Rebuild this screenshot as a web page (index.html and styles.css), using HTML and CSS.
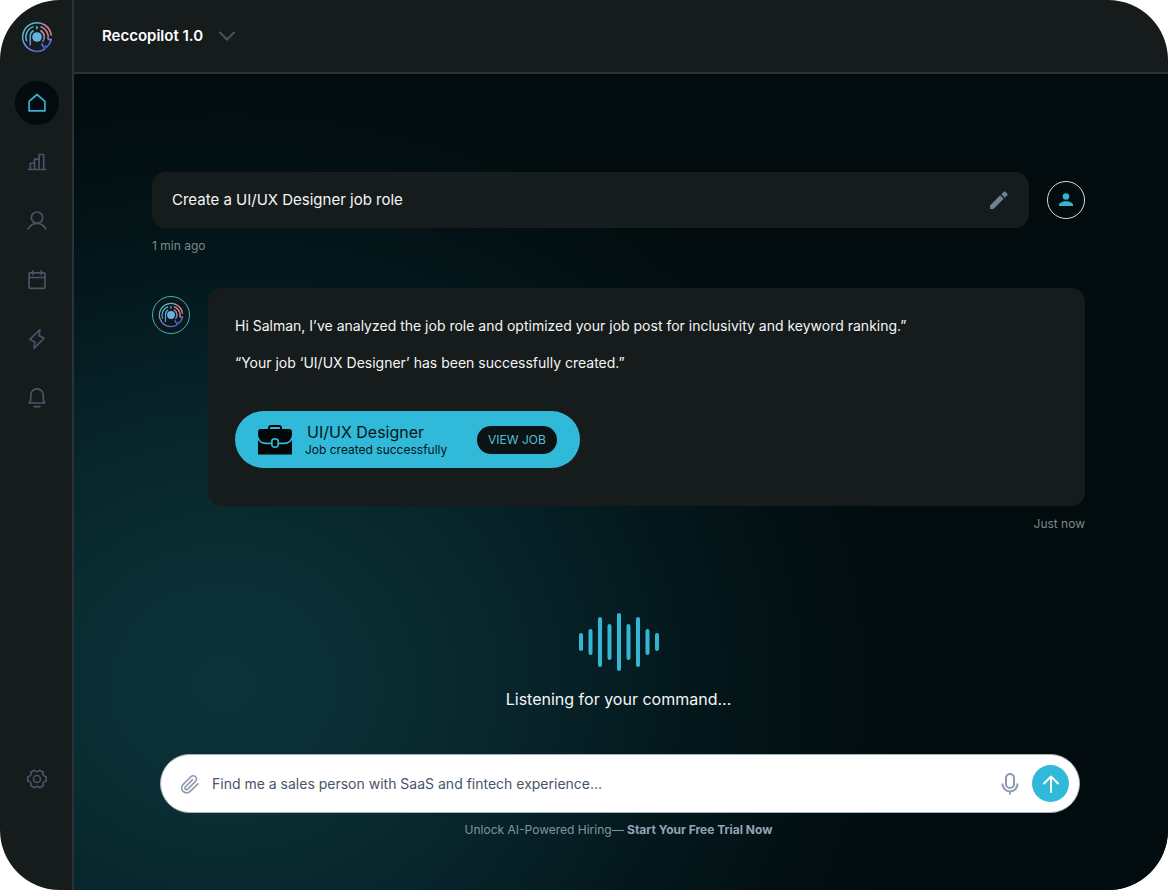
FILE: index.html
```html
<!DOCTYPE html>
<html lang="en">
<head>
<meta charset="utf-8">
<meta name="viewport" content="width=device-width, initial-scale=1">
<title>Reccopilot</title>
<link rel="stylesheet" href="styles.css">
</head>
<body>
<svg class="defs" aria-hidden="true">
  <defs>
    <linearGradient id="brand" x1="6" y1="6" x2="22" y2="30" gradientUnits="userSpaceOnUse">
      <stop offset="0" stop-color="#4cc3cf"/>
      <stop offset=".55" stop-color="#6b93d8"/>
      <stop offset="1" stop-color="#4560d6"/>
    </linearGradient>
    <radialGradient id="warm" cx="28" cy="9" r="13" gradientUnits="userSpaceOnUse">
      <stop offset="0" stop-color="#f06a68"/>
      <stop offset=".45" stop-color="#e0707c" stop-opacity=".85"/>
      <stop offset="1" stop-color="#b07aa8" stop-opacity="0"/>
    </radialGradient>
    <g id="logo-lines">
      <path d="M30.200 14.500A14.300 14.300 0 1 0 23.800 28L20.500 22.500"/>
      <path d="M27 18.500H30.200A14.300 14.300 0 0 1 25.500 26.500L24 24.500"/>
      <path d="M5.800 20.500A11 11 0 0 1 12.500 5.600M15.900 5V8.300M19.500 5.600A11 11 0 0 1 27 18.500"/>
      <path d="M9.200 24.500V16A7.300 7.300 0 0 1 12.500 9.500M19.500 9.500A7.500 7.500 0 0 1 21.500 21"/>
    </g>
    <symbol id="logo" viewBox="0 0 32 32">
      <g fill="none" stroke-width="1.500">
        <use href="#logo-lines" stroke="url(#brand)"/>
        <use href="#logo-lines" stroke="url(#warm)"/>
      </g>
      <circle cx="16" cy="16" r="4.800" fill="#65b4e0"/>
    </symbol>
  </defs>
</svg>
<div class="app">
  <nav class="sidebar" aria-label="Main">
    <a class="brand" href="#" aria-label="Reccopilot"><svg class="brand-logo"><use href="#logo"/></svg></a>
    <div class="nav-list">
      <a class="nav-item nav-item-active" href="#" aria-label="Home"><svg class="icon" viewBox="0 0 24 24"><path d="M2.500 21.500V10L12 1.800L21.500 10V21.500Z"/></svg></a>
      <a class="nav-item" href="#" aria-label="Analytics"><svg class="icon" viewBox="0 0 24 24"><path d="M1.500 21H22.500M4 21V13.500H9V21M9 21V8.500H14.500V21M14.500 21V3H20V21"/></svg></a>
      <a class="nav-item" href="#" aria-label="Candidates"><svg class="icon" viewBox="0 0 24 24"><circle cx="12" cy="8" r="6.800"/><path d="M1.500 21.500C4 16.800 8 14.800 12 14.800S20 16.800 22.500 21.500"/></svg></a>
      <a class="nav-item" href="#" aria-label="Calendar"><svg class="icon" viewBox="0 0 24 24"><rect x="2.500" y="3.500" width="19" height="18.500" rx="1"/><path d="M2.500 9H21.500M7 1V5.500M17 1V5.500"/></svg></a>
      <a class="nav-item" href="#" aria-label="Automation"><svg class="icon" viewBox="0 0 24 24"><path d="M15.500 .8L3.500 12.500L9.500 15.500L8.500 23.200L20.500 11L14.500 8Z"/></svg></a>
      <a class="nav-item" href="#" aria-label="Notifications"><svg class="icon" viewBox="0 0 24 24"><path d="M2.500 18H21.500L19.500 14.500V8.500A7.500 7.500 0 0 0 4.500 8.500V14.500ZM8.500 22.300H15.500"/></svg></a>
    </div>
    <a class="nav-item nav-item-settings" href="#" aria-label="Settings"><svg class="icon" viewBox="0 0 24 24"><circle cx="12" cy="12" r="4.200"/><path d="M9 1.500C10 3.600 14 3.600 15 1.500L19.500 4C18.300 6.400 19.500 9 23 9.300V14.700C19.500 15 18.300 17.600 19.500 20L15 22.500C14 20.400 10 20.400 9 22.500L4.500 20C5.700 17.600 4.500 15 1 14.700V9.300C4.500 9 5.700 6.400 4.500 4Z"/></svg></a>
  </nav>

  <div class="workspace">
    <header class="topbar">
      <div class="model">
        <select class="model-select" aria-label="Model"><option>Reccopilot 1.0</option></select>
        <svg class="model-chevron" viewBox="0 0 18 10" aria-hidden="true"><path d="M1.500 1L9 8.500L16.500 1"/></svg>
      </div>
    </header>

    <main class="chat">
      <section class="message message-user">
        <div class="prompt">
          <p class="prompt-text">Create a UI/UX Designer job role</p>
          <button class="icon-button" type="button" aria-label="Edit prompt"><svg class="edit-icon" viewBox="0 0 20 20"><path d="M1 15.500V19H4.500L14.700 8.800L11.200 5.300ZM12.300 4.200L15.800 7.700L18.600 4.900Q19 4.500 18.600 4L16 1.400Q15.500 1 15.100 1.400Z"/></svg></button>
        </div>
        <span class="avatar avatar-user"><svg class="user-icon" viewBox="0 0 16 16"><circle cx="8" cy="4.500" r="3.300"/><path d="M1 14V13C1 10.500 5 9.300 8 9.300S15 10.500 15 13V14Z"/></svg></span>
      </section>
      <time class="stamp">1 min ago</time>

      <section class="message message-bot">
        <span class="avatar avatar-bot"><svg class="avatar-logo"><use href="#logo"/></svg></span>
        <div class="reply">
          <p class="reply-text">Hi Salman, I’ve analyzed the job role and optimized your job post for inclusivity and keyword ranking.”</p>
          <p class="reply-text">“Your job ‘UI/UX Designer’ has been successfully created.”</p>
          <div class="job">
            <svg class="job-icon" viewBox="0 0 34 30" aria-hidden="true">
              <path d="M11 5V3Q11 1 13 1H21Q23 1 23 3V5" fill="none" stroke="#030708" stroke-width="2"/>
              <path d="M3 4H31Q34 4 34 7V10Q33 17.500 26 17.500H21V16Q21 13 17 13T13 16V17.500H8Q1 17.500 0 10V7Q0 4 3 4Z"/>
              <path d="M0 15Q3 19.300 8 19.300H13Q13 23 17 23T21 19.300H26Q31 19.300 34 15V29.500H0Z"/>
              <rect x="14.700" y="14.700" width="4.600" height="6.600" rx="1.500"/>
            </svg>
            <div class="job-info">
              <strong class="job-title">UI/UX Designer</strong>
              <span class="job-status">Job created successfully</span>
            </div>
            <button class="job-view" type="button">VIEW JOB</button>
          </div>
        </div>
      </section>
      <time class="stamp stamp-end">Just now</time>

      <section class="listening">
        <svg class="wave" viewBox="0 0 80 58" aria-hidden="true"><path d="M2 22V36M11.500 18V40M21 6V52M30.500 13V45M40 2V56M49.500 13V45M59 6V52M68.500 18V40M78 22V36"/></svg>
        <p class="listening-text">Listening for your command...</p>
      </section>

      <form class="composer">
        <button class="icon-button" type="button" aria-label="Attach file"><svg class="clip-icon" viewBox="0 0 24 24"><path d="M21.440 11.050L12.250 20.240A6 6 0 0 1 3.760 11.750L12.950 2.560A4 4 0 0 1 18.610 8.220L9.410 17.410A2 2 0 0 1 6.580 14.580L15.070 6.100" transform="translate(0 .7)"/></svg></button>
        <input class="composer-input" type="text" aria-label="Message" placeholder="Find me a sales person with SaaS and fintech experience...">
        <button class="icon-button" type="button" aria-label="Voice input"><svg class="mic-icon" viewBox="0 0 18 22"><rect x="5" y="1" width="8" height="14" rx="4"/><path d="M1.500 10.500V11A7.500 7.500 0 0 0 16.500 11V10.500M9 18.500V21.500"/></svg></button>
        <button class="send" type="submit" aria-label="Send"><svg class="send-icon" viewBox="0 0 18 18"><path d="M9 17V1.500M2 8.500L9 1.500L16 8.500"/></svg></button>
      </form>
      <p class="promo">Unlock AI-Powered Hiring— <a class="promo-link" href="#">Start Your Free Trial Now</a></p>
    </main>
  </div>
</div>
</body>
</html>
```
FILE: styles.css
```css
* { box-sizing: border-box; }

body {
  margin: 0;
  background: #fff;
  font-family: Inter, "Liberation Sans", sans-serif;
}

p { margin: 0; }
button { border: 0; padding: 0; cursor: pointer; font-family: inherit; }

.defs { position: absolute; width: 0; height: 0; }

.app {
  display: flex;
  min-height: 100vh;
  border-radius: 60px;
  overflow: hidden;
  background: #161c1c;
}

.sidebar {
  display: flex;
  flex-direction: column;
  align-items: center;
  width: 74px;
  padding: 21px 0 89px 1px;
  border-right: 2px solid #27323a;
}

.brand { display: flex; }
.brand-logo { width: 32px; height: 32px; }

.nav-list {
  display: flex;
  flex-direction: column;
  gap: 15px;
  margin-top: 28px;
}

.nav-item {
  display: grid;
  place-items: center;
  width: 44px;
  height: 44px;
  border-radius: 50%;
  color: #475569;
}

.nav-item-active { background: #030b0e; color: #33b5d3; }
.nav-item-settings { margin-top: auto; }

.icon {
  width: 20px;
  height: 20px;
  fill: none;
  stroke: currentColor;
  stroke-width: 2;
  stroke-linejoin: round;
  stroke-linecap: round;
}

.workspace {
  display: flex;
  flex-direction: column;
  flex: 1;
  min-width: 0;
}

.topbar {
  display: flex;
  align-items: center;
  height: 74px;
  padding: 0 28px;
  border-bottom: 2px solid #27323a;
}

.model { display: grid; align-items: center; }

.model-select {
  grid-area: 1 / 1;
  padding: 0 32px 0 0;
  border: 0;
  appearance: none;
  background: transparent;
  color: #fff;
  font: 600 15px/24px Inter, sans-serif;
}

.model-chevron {
  grid-area: 1 / 1;
  justify-self: end;
  width: 18px;
  height: 10px;
  fill: none;
  stroke: #475569;
  stroke-width: 2;
  pointer-events: none;
}

.chat {
  display: flex;
  flex-direction: column;
  flex: 1;
  padding: 98px 83px 50px 78px;
  background:
    radial-gradient(ellipse 720px 640px at 150px 610px, #0b3339 0%, #0a2e33 20%, #07242a 42%, #04181c 64%, #020f12 84%, rgba(2, 11, 13, 0) 100%),
    #020b0d;
}

.message { display: flex; gap: 18px; }
.message-user { align-items: center; }

.prompt {
  display: flex;
  flex: 1;
  align-items: center;
  justify-content: space-between;
  min-height: 56px;
  padding: 0 20px;
  border-radius: 14px;
  background: #161c1c;
  color: #f4f6f6;
}

.prompt-text { font-size: 15px; line-height: 24px; }

.icon-button { display: flex; background: none; }
.edit-icon { width: 20px; height: 20px; fill: #718096; }

.avatar {
  display: grid;
  flex: none;
  place-items: center;
  width: 38px;
  height: 38px;
  border-radius: 50%;
}

.avatar-user { border: 1px solid #d5dcdc; background: #020b0d; }
.user-icon { width: 16px; height: 16px; fill: #33b5d3; }

.stamp {
  margin-top: 9px;
  color: #7d898b;
  font-size: 12px;
  line-height: 18px;
}

.stamp-end { align-self: flex-end; }

.message-bot { align-items: flex-start; margin-top: 33px; }
.avatar-bot { margin-top: 8px; border: 1px solid #36b3cc; background: #101718; }
.avatar-logo { width: 26px; height: 26px; }

.reply {
  flex: 1;
  padding: 26px 27px 38px;
  border-radius: 14px;
  background: #161c1c;
  color: #f4f6f6;
}

.reply-text { font-size: 14px; line-height: 24px; }
.reply-text + .reply-text { margin-top: 13px; }

.job {
  display: flex;
  align-items: center;
  width: 345px;
  max-width: 100%;
  min-height: 57px;
  margin-top: 36px;
  padding: 0 23px;
  border-radius: 29px;
  background: #30b9d9;
  color: #071315;
}

.job-icon { width: 34px; height: 30px; fill: #030708; }
.job-info { display: flex; flex: 1; flex-direction: column; margin-left: 13px; }
.job-title { padding-left: 2px; font-size: 16px; font-weight: 400; line-height: 20px; }
.job-status { font-size: 12px; line-height: 16px; }

.job-view {
  width: 80px;
  height: 28px;
  border-radius: 14px;
  background: #0b1315;
  color: #55bfd7;
  font-size: 12px;
}

.listening {
  display: flex;
  flex-direction: column;
  align-items: center;
  gap: 16px;
  margin-top: 80px;
}

.wave {
  width: 80px;
  height: 58px;
  fill: none;
  stroke: #33b5d3;
  stroke-width: 4;
  stroke-linecap: round;
}

.listening-text { color: #f4f6f6; font-size: 16px; line-height: 24px; }

.composer {
  display: flex;
  align-items: center;
  min-height: 59px;
  margin: 43px 5px 0 8px;
  padding: 0 10px 0 19px;
  border: 1px solid #a5b3bd;
  border-radius: 30px;
  background: #fff;
}

.clip-icon {
  width: 20px;
  height: 20px;
  fill: none;
  stroke: #8d9bb0;
  stroke-width: 2;
  stroke-linecap: round;
}

.composer-input {
  flex: 1;
  min-width: 0;
  margin: 0 12px;
  padding: 0;
  border: 0;
  outline: 0;
  background: transparent;
  color: #475569;
  font: 400 14px/24px Inter, sans-serif;
}

.composer-input::placeholder { color: #475569; opacity: 1; }

.mic-icon {
  width: 18px;
  height: 22px;
  fill: none;
  stroke: #8d9bb0;
  stroke-width: 2;
}

.send {
  display: grid;
  place-items: center;
  width: 37px;
  height: 37px;
  margin-left: 13px;
  border-radius: 50%;
  background: #30b9d9;
}

.send-icon {
  width: 18px;
  height: 18px;
  fill: none;
  stroke: #fff;
  stroke-width: 2;
  stroke-linecap: round;
  stroke-linejoin: round;
}

.promo {
  margin-top: 8px;
  color: #8593a6;
  font-size: 12px;
  line-height: 18px;
  text-align: center;
}

.promo-link { color: #94a3b8; font-weight: 700; text-decoration: none; }
```
